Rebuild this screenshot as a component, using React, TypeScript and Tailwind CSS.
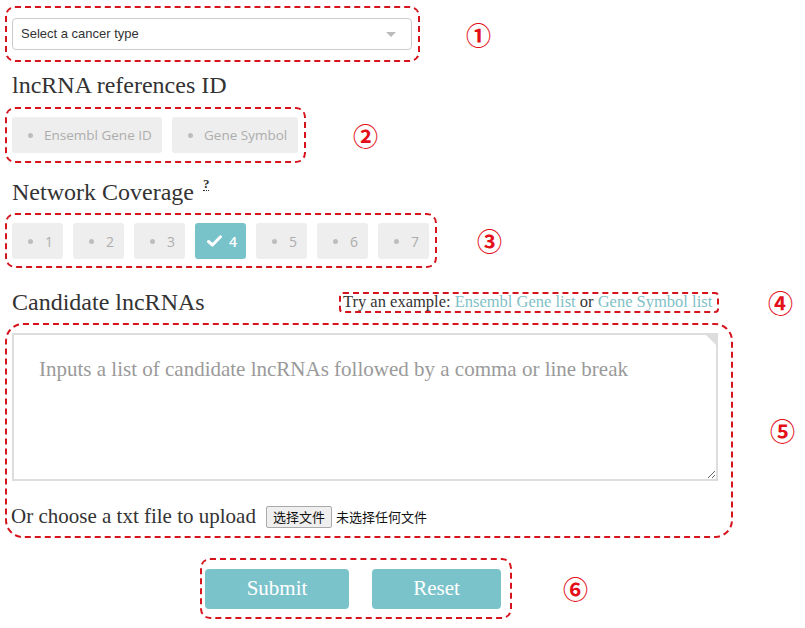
import React from 'react'

const serif = "font-['Liberation_Serif',serif]"
const sans = "font-['Open_Sans','Liberation_Sans',sans-serif]"
const mark = "font-['Noto_Sans_CJK_SC',sans-serif] font-bold text-[25px] leading-none text-[#e3101a]"
const dashed = 'border-2 border-dashed border-[#d6141d]'

const Dot = ({ muted = true }: { muted?: boolean }) => (
  <span className={`inline-block w-[5px] h-[5px] rounded-full ${muted ? 'bg-[#bdbdbd]' : 'bg-white'}`} />
)

const Check = () => (
  <svg width="15" height="12" viewBox="0 0 15 12" className="shrink-0">
    <path d="M1.5 6.5 L5.5 10 L13.5 1.8" fill="none" stroke="white" strokeWidth="3" strokeLinecap="round" strokeLinejoin="round" />
  </svg>
)

const RadioButton = ({ label, width }: { label: string; width: string }) => (
  <div className={`${width} h-[36px] rounded-[3px] bg-[#eeeeee] flex items-center pl-[16px] gap-[11px] text-[13.5px] text-[#adadad] ${sans}`}>
    <Dot />
    <span>{label}</span>
  </div>
)

const coverage = [1, 2, 3, 4, 5, 6, 7]

export default function App() {
  return (
    <div className="w-[805px] h-[628px] bg-white overflow-hidden">
      {/* 1: cancer type */}
      <div className="flex items-center pt-[6px] pl-[5px]">
        <div className={`w-[415px] h-[56px] ${dashed} rounded-[10px] pl-[5px] pt-[10px]`}>
          <div className="w-[400px] h-[32px] rounded-[4px] border border-[#cccccc] flex items-center justify-between pl-[8px] pr-[15px]">
            <span className="font-['Liberation_Sans',sans-serif] text-[13px] text-[#333]">Select a cancer type</span>
            <span className="w-0 h-0 border-l-[5px] border-r-[5px] border-t-[5px] border-l-transparent border-r-transparent border-t-[#bbbbbb]" />
          </div>
        </div>
        <span className={`${mark} ml-[46px]`}>①</span>
      </div>

      <h2 className={`${serif} text-[24px] leading-[29px] text-[#333] pl-[12px] mt-[9px] mb-[7px]`}>lncRNA references ID</h2>

      {/* 2: reference id */}
      <div className="flex items-center pl-[5px]">
        <div className={`w-[301px] h-[56px] ${dashed} rounded-[10px] pl-[5px] pt-[8px] flex gap-[10px]`}>
          <RadioButton label="Ensembl Gene ID" width="w-[150px]" />
          <RadioButton label="Gene Symbol" width="w-[126px]" />
        </div>
        <span className={`${mark} ml-[47px]`}>②</span>
      </div>

      <h2 className={`${serif} text-[24px] leading-[29px] text-[#333] pl-[12px] mt-[15px] mb-[6px] flex items-start`}>
        Network Coverage
        <abbr className="ml-[9px] -mt-[1px] text-[13px] font-bold no-underline border-b border-dotted border-[#333] leading-[13px]">?</abbr>
      </h2>

      {/* 3: network coverage */}
      <div className="flex items-center pl-[5px]">
        <div className={`w-[432px] h-[55px] ${dashed} rounded-[10px] pl-[5px] pt-[8px] flex gap-[10px]`}>
          {coverage.map((n) =>
            n === 4 ? (
              <div key={n} className={`w-[51px] h-[36px] rounded-[3px] bg-[#78c2ca] flex items-center pl-[12px] gap-[7px] text-[14px] text-white font-semibold ${sans}`}>
                <Check />
                <span>{n}</span>
              </div>
            ) : (
              <div key={n} className={`w-[51px] h-[36px] rounded-[3px] bg-[#eeeeee] flex items-center pl-[16px] gap-[12px] text-[14px] text-[#adadad] ${sans}`}>
                <Dot />
                <span>{n}</span>
              </div>
            )
          )}
        </div>
        <span className={`${mark} ml-[40px]`}>③</span>
      </div>

      {/* 4: example links */}
      <div className="flex items-center h-[21px] mt-[24px] pl-[12px]">
        <h2 className={`${serif} w-[327px] text-[24px] leading-[29px] text-[#333]`}>Candidate lncRNAs</h2>
        <div className={`w-[380px] h-[21px] ${dashed} rounded-[4px] flex items-center pl-[2px] ${serif} text-[16.5px] text-[#333] whitespace-nowrap`}>
          Try an example:&nbsp;<span className="text-[#7fbfc7]">Ensembl Gene list</span>&nbsp;or&nbsp;<span className="text-[#7fbfc7]">Gene Symbol list</span>
        </div>
        <span className={`${mark} ml-[49px]`}>④</span>
      </div>

      {/* 5: candidate input */}
      <div className="flex items-center pl-[5px] mt-[10px]">
        <div className={`w-[728px] h-[215px] ${dashed} rounded-[18px] pl-[5px] pt-[8px]`}>
          <div className="relative w-[706px] h-[148px]">
            <textarea
              className={`w-full h-full border-2 border-[#dddddd] pl-[25px] pt-[19px] ${serif} text-[21px] text-[#333] placeholder:text-[#9a9a9a] outline-none`}
              placeholder="Inputs a list of candidate lncRNAs followed by a comma or line break"
            />
            <span className="absolute top-0 right-0 w-0 h-0 border-l-[14px] border-b-[14px] border-l-transparent border-b-transparent border-t-[14px] border-t-[#dddddd] border-r-[0px]" />
          </div>
          <div className="flex items-center mt-[20px] -ml-[1px]">
            <span className={`${serif} text-[21px] text-[#333]`}>Or choose a txt file to upload</span>
            <span className="ml-[10px] h-[22px] px-[6px] border border-[#aaaaaa] rounded-[2px] bg-[#efefef] flex items-center font-['Noto_Sans_CJK_SC',sans-serif] text-[13px] text-[#111]">选择文件</span>
            <span className="ml-[4px] font-['Noto_Sans_CJK_SC',sans-serif] text-[13px] text-[#111]">未选择任何文件</span>
          </div>
        </div>
        <span className={`${mark} ml-[37px]`}>⑤</span>
      </div>

      {/* 6: actions */}
      <div className="flex items-center pl-[200px] mt-[20px]">
        <div className={`w-[312px] h-[61px] ${dashed} rounded-[10px] pl-[3px] pt-[9px] flex gap-[23px]`}>
          <button className={`w-[144px] h-[40px] rounded-[4px] bg-[#7bc3cb] text-white text-[21px] ${serif}`}>Submit</button>
          <button className={`w-[129px] h-[40px] rounded-[4px] bg-[#7bc3cb] text-white text-[21px] ${serif}`}>Reset</button>
        </div>
        <span className={`${mark} ml-[51px]`}>⑥</span>
      </div>
    </div>
  )
}
